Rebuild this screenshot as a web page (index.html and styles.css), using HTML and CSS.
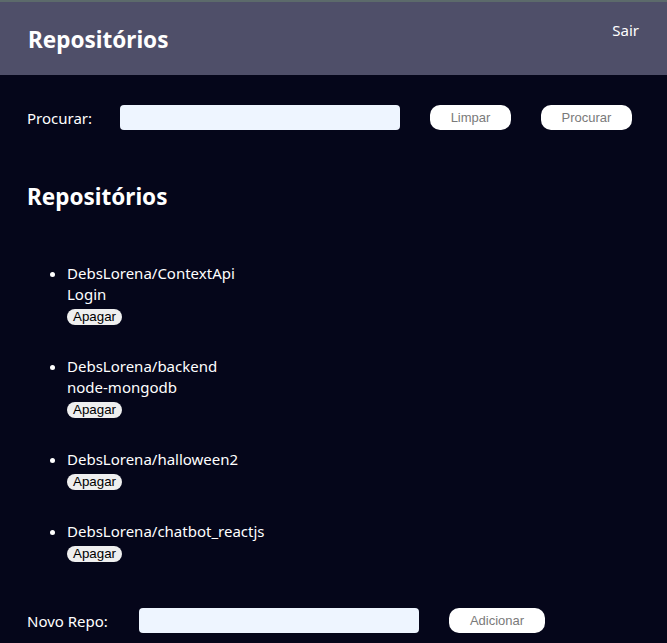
FILE: index.html
```html
<!DOCTYPE html>
<html lang="pt">
<head>
<meta charset="utf-8">
<title>Repositórios</title>
<link rel="stylesheet" href="styles.css">
</head>
<body>
<header class="header">
  <h1 class="header-title">Repositórios</h1>
  <button class="logout">Sair</button>
</header>
<main class="main">
  <div class="search">
    <label class="label search-label">Procurar:</label>
    <input class="field search-field" type="text">
    <button class="btn btn-clear">Limpar</button>
    <button class="btn btn-search">Procurar</button>
  </div>
  <h2 class="title">Repositórios</h2>
  <ul class="repos">
    <li class="repo">
      <div class="repo-name">DebsLorena/ContextApi<br>Login</div>
      <button class="del">Apagar</button>
    </li>
    <li class="repo">
      <div class="repo-name">DebsLorena/backend<br>node-mongodb</div>
      <button class="del">Apagar</button>
    </li>
    <li class="repo">
      <div class="repo-name">DebsLorena/halloween2</div>
      <button class="del">Apagar</button>
    </li>
    <li class="repo">
      <div class="repo-name">DebsLorena/chatbot_reactjs</div>
      <button class="del">Apagar</button>
    </li>
  </ul>
  <div class="new">
    <label class="label new-label">Novo Repo:</label>
    <input class="field new-field" type="text">
    <button class="btn btn-add">Adicionar</button>
  </div>
</main>
</body>
</html>
```
FILE: styles.css
```css
html, body {
  margin: 0;
  padding: 0;
  background: #05061a;
  color: #ffffff;
  font-family: "Noto Sans", "Open Sans", sans-serif;
}
.header {
  border-top: 2px solid #5c6a6b;
  background: #4f4f69;
  height: 73px;
  display: flex;
  justify-content: space-between;
  align-items: flex-start;
  padding: 0 28px;
}
.header-title {
  margin: 24px 0 0;
  font-size: 22.5px;
  font-weight: 700;
  line-height: 28px;
}
.logout {
  margin: 18px 0 0 0;
  background: none;
  border: none;
  color: #fff;
  font-family: inherit;
  font-size: 15px;
  line-height: 20px;
  padding: 0;
}
.main {
  padding: 0 27px;
}
.search, .new {
  display: flex;
  align-items: center;
  height: 25px;
}
.search {
  margin-top: 30px;
}
.label {
  font-size: 15px;
  color: #fff;
}
.search-label { width: 93px; }
.new-label { width: 112px; }
.field {
  width: 280px;
  height: 25px;
  box-sizing: border-box;
  border: none;
  border-radius: 4px;
  background: #eef5ff;
  padding: 0 6px;
}
.btn {
  height: 25px;
  border: none;
  border-radius: 10px;
  background: #fff;
  color: #7a7a7a;
  font-family: "Liberation Sans", Arial, sans-serif;
  font-size: 13px;
  margin-left: 30px;
  padding: 0;
}
.btn-clear { width: 81px; }
.btn-search { width: 91px; }
.btn-add { width: 96px; }
.title {
  margin: 53px 0 0;
  font-size: 22.5px;
  font-weight: 700;
  line-height: 28px;
}
.repos {
  margin: 52px 0 0;
  padding-left: 40px;
  font-size: 15px;
}
.repo {
  line-height: 21px;
  margin-bottom: 31px;
}
.repo-name {
  line-height: 21px;
}
.del {
  display: block;
  margin-top: 4px;
  height: 16px;
  padding: 0 6px;
  border: none;
  border-radius: 8px;
  background: #efefef;
  color: #000;
  font-family: "Liberation Sans", Arial, sans-serif;
  font-size: 13.33px;
  line-height: 16px;
}
.new {
  margin-top: 46px;
}
```
